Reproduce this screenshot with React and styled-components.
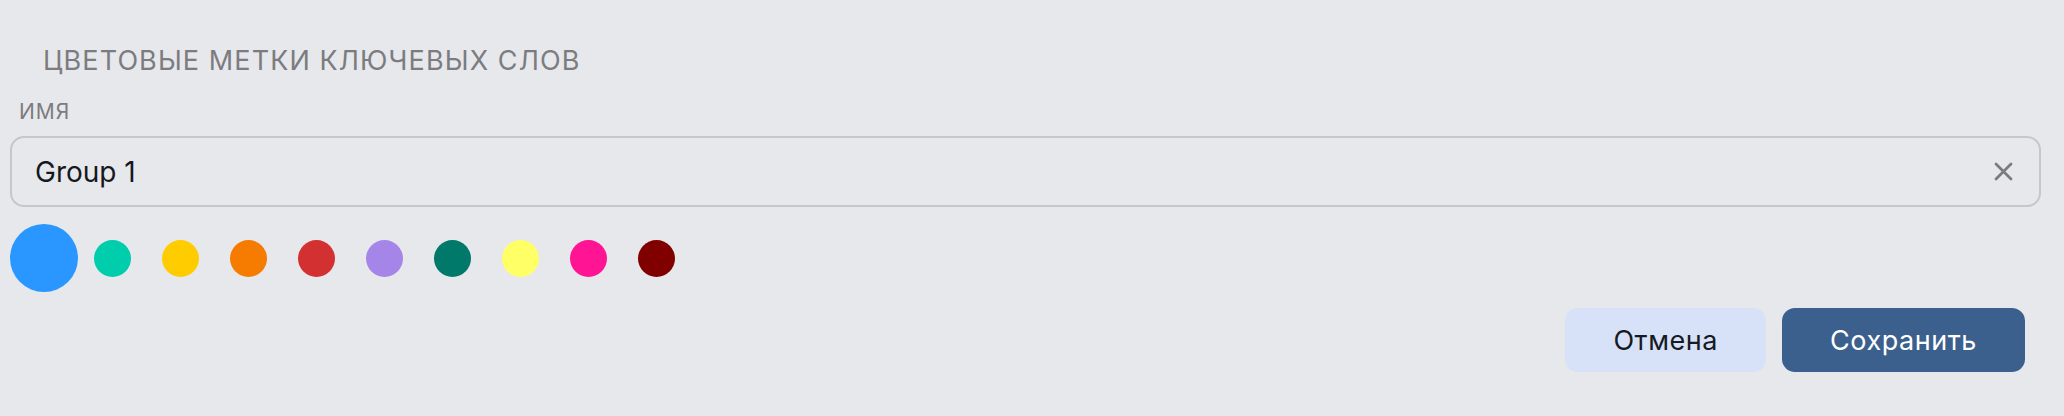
import React from "react";
import styled, { createGlobalStyle } from "styled-components";

const Global = createGlobalStyle`
  html, body {
    margin: 0;
    padding: 0;
    background: #e7e8ec;
  }
  body {
    font-family: Inter, "Noto Sans", sans-serif;
  }
`;

const Panel = styled.div`
  box-sizing: border-box;
  width: 2064px;
  height: 416px;
  padding: 45px 23px 0 10px;
  background: #e7e8ec;
  display: flex;
  flex-direction: column;
`;

const Title = styled.h2`
  margin: 0 0 0 33px;
  font-size: 27px;
  line-height: 32px;
  font-weight: 400;
  letter-spacing: 1.1px;
  color: #7c7c80;
  text-transform: uppercase;
`;

const Label = styled.label`
  margin: 23px 0 0 9px;
  font-size: 21px;
  line-height: 24px;
  font-weight: 400;
  letter-spacing: 1px;
  color: #7c7c80;
`;

const Field = styled.div`
  box-sizing: border-box;
  margin-top: 12px;
  height: 71px;
  display: flex;
  align-items: center;
  border: 2px solid #c6c7cc;
  border-radius: 14px;
  padding: 0 26px 0 23px;
`;

const Input = styled.input`
  flex: 1;
  border: none;
  background: transparent;
  outline: none;
  font-family: inherit;
  font-size: 28px;
  color: #16181d;
  padding: 0;
`;

const ClearButton = styled.button`
  border: none;
  background: transparent;
  padding: 0;
  width: 20px;
  height: 20px;
  display: flex;
  align-items: center;
  justify-content: center;
  cursor: pointer;
`;

const Swatches = styled.div`
  margin-top: 17px;
  display: flex;
  align-items: center;
  height: 68px;
`;

const SwatchCell = styled.div`
  width: 68px;
  height: 68px;
  display: flex;
  align-items: center;
  justify-content: center;
`;

const Swatch = styled.div`
  width: ${(p) => (p.$selected ? 68 : 37)}px;
  height: ${(p) => (p.$selected ? 68 : 37)}px;
  border-radius: 50%;
  background: ${(p) => p.$color};
`;

const Actions = styled.div`
  margin-top: 16px;
  display: flex;
  justify-content: flex-end;
  gap: 16px;
  padding-right: 16px;
`;

const Button = styled.button`
  height: 64px;
  padding: 0 48px;
  border: none;
  border-radius: 13px;
  font-family: inherit;
  font-size: 27px;
  font-weight: 400;
  letter-spacing: 0.55px;
  background: ${(p) => (p.$primary ? "#3b608d" : "#d7e1f7")};
  color: ${(p) => (p.$primary ? "#ffffff" : "#161a22")};
  cursor: pointer;
`;

const colors = [
  "#2997ff",
  "#00cdab",
  "#ffcc00",
  "#f57c00",
  "#d33131",
  "#a685e9",
  "#00796b",
  "#ffff66",
  "#ff1493",
  "#800000",
];

export default function App() {
  return (
    <>
      <Global />
      <Panel>
        <Title>Цветовые метки ключевых слов</Title>
        <Label>ИМЯ</Label>
        <Field>
          <Input defaultValue="Group 1" />
          <ClearButton aria-label="clear">
            <svg width="19" height="19" viewBox="0 0 19 19">
              <path
                d="M2 2 L17 17 M17 2 L2 17"
                stroke="#7b7b7f"
                strokeWidth="2.8"
                strokeLinecap="round"
              />
            </svg>
          </ClearButton>
        </Field>
        <Swatches>
          {colors.map((c, i) => (
            <SwatchCell key={c}>
              <Swatch $color={c} $selected={i === 0} />
            </SwatchCell>
          ))}
        </Swatches>
        <Actions>
          <Button>Отмена</Button>
          <Button $primary>Сохранить</Button>
        </Actions>
      </Panel>
    </>
  );
}
